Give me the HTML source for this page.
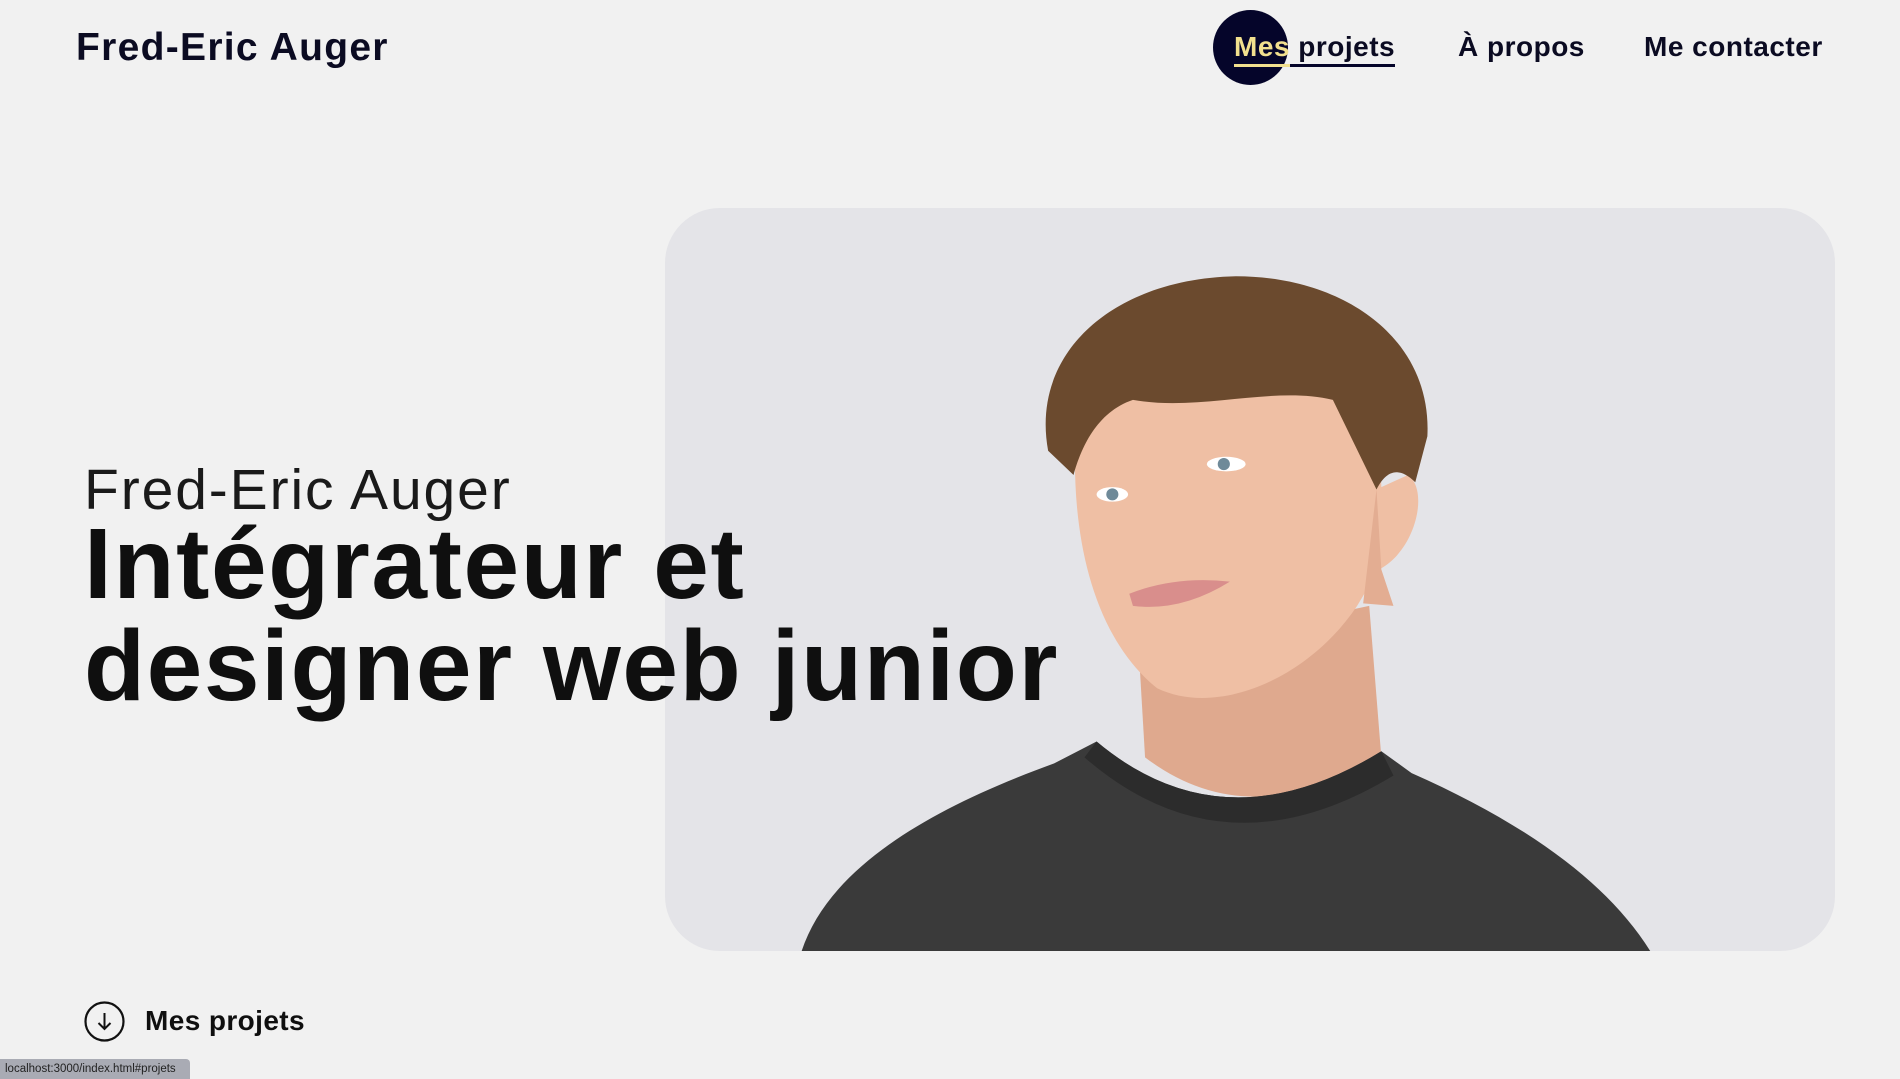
<!DOCTYPE html>
<html><head><meta charset="utf-8"><style>
html,body{margin:0;padding:0}
body{width:1900px;height:1079px;background:#f1f1f1;position:relative;overflow:hidden;font-family:"Liberation Sans",sans-serif;color:#0b0b22}
.logo{position:absolute;left:76px;top:26px;font-size:39px;font-weight:700;letter-spacing:1.3px}
.nav{position:absolute;top:31px;font-size:28px;font-weight:700;letter-spacing:0.5px}
.circle{position:absolute;left:1213px;top:10px;width:75px;height:75px;border-radius:50%;background:#05052a}
.card{position:absolute;left:665px;top:208px;width:1170px;height:743px;border-radius:55px;background:#e4e4e8;overflow:hidden}
.sub{position:absolute;left:84px;top:457px;font-size:57px;color:#1a1a1a;letter-spacing:1.9px}
.h1{position:absolute;left:84px;top:513px;font-size:100px;font-weight:700;line-height:102px;letter-spacing:1.6px;color:#0f0f0f}
.stat{position:absolute;left:0;top:1059px;width:190px;height:20px;background:#a9abb4;border-top-right-radius:4px;font-size:11.5px;color:#222;line-height:20px;padding-left:5px;box-sizing:border-box}
</style></head><body>
<div class="logo">Fred-Eric Auger</div>
<div class="circle"></div>
<div class="nav" style="left:1234px;"><span style="color:#f2e08e">Mes</span> projets<div style="position:absolute;left:0;right:0;top:33px;height:3px;background:#05052a"></div><div style="position:absolute;left:0;width:56px;top:33px;height:3px;background:#f2e08e"></div></div>
<div class="nav" style="left:1458px;">À propos</div>
<div class="nav" style="left:1644px;">Me contacter</div>
<div class="card">
<svg width="1170" height="743" viewBox="665 208 1170 743" style="position:absolute;left:0;top:0">
<g transform="scale(1.2117)">
<path d="M940,540 L945,625 Q1030,690 1140,625 L1130,500 Z" fill="#dfa98e"/>
<path d="M660,790 C680,720 760,670 870,630 L905,612 Q1010,700 1140,620 L1165,638 C1260,680 1330,730 1365,790 Z" fill="#3a3a3a"/>
<path d="M905,612 Q1010,700 1140,620 L1150,640 Q1010,725 895,625 Z" fill="#2c2c2c"/>
<path d="M890,330 C880,420 895,520 955,568 C1005,592 1080,560 1120,500 L1138,470 C1168,455 1180,405 1162,392 L1140,402 C1140,340 1100,300 1040,290 Z" fill="#efbfa4"/>
<path d="M865,372 C850,290 920,230 1020,228 C1110,228 1182,280 1178,360 L1168,398 C1152,382 1142,392 1136,404 L1100,330 C1050,318 990,340 935,330 C905,340 892,370 886,392 Z" fill="#6b4a2e"/>
<path d="M1136,404 L1140,470 L1150,500 L1125,498 Z" fill="#e3ad92"/>
<ellipse cx="918" cy="408" rx="13" ry="6" fill="#fff"/><circle cx="918" cy="408" r="5" fill="#6f8a99"/>
<ellipse cx="1012" cy="383" rx="16" ry="6" fill="#fff"/><circle cx="1010" cy="383" r="5" fill="#6f8a99"/>
<path d="M932,490 Q970,475 1015,480 Q975,505 935,500 Z" fill="#d98e8c"/>
</g></svg>
</div>
<div class="sub">Fred-Eric Auger</div>
<div class="h1">Intégrateur et<br>designer web junior</div>
<svg style="position:absolute;left:84px;top:1001px" width="41" height="41" viewBox="0 0 41 41"><circle cx="20.5" cy="20.5" r="19" fill="none" stroke="#111" stroke-width="2.2"/><path d="M20.5 12 V28 M14.5 22 L20.5 28 L26.5 22" fill="none" stroke="#111" stroke-width="2"/></svg>
<div style="position:absolute;left:145px;top:1005px;font-size:28px;font-weight:700;letter-spacing:0.4px;color:#0f0f0f">Mes projets</div>
<div class="stat">localhost:3000/index.html#projets</div>
</body></html>
